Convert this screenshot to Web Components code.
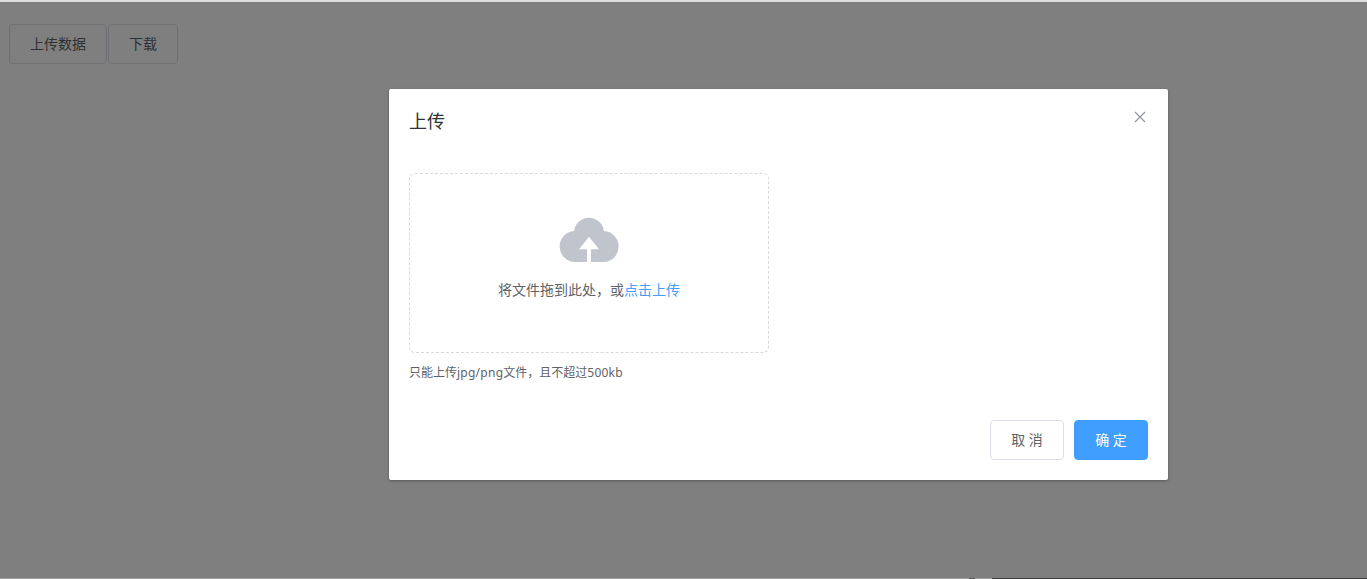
<!DOCTYPE html>
<html lang="zh-CN"><head><meta charset="utf-8"><title>上传</title>
<style>
html,body{margin:0;height:100%;overflow:hidden;background:#fff}
body{font-family:"Noto Sans","Noto Sans CJK SC","Liberation Sans",sans-serif;font-size:14px;color:#606266}
.latin{letter-spacing:.25px}
</style></head><body>
<app-page>
  <app-button slot="toolbar">上传数据</app-button>
  <app-button slot="toolbar">下载</app-button>
  <upload-dialog slot="overlay" heading="上传">
    <upload-dragger>
      <span>将文件拖到此处，或</span><em>点击上传</em>
    </upload-dragger>
    <span slot="tip">只能上传<span class="latin">jpg/png</span>文件，且不超过<span class="latin">500kb</span></span>
    <app-button slot="footer" spaced>取 消</app-button>
    <app-button slot="footer" primary spaced>确 定</app-button>
  </upload-dialog>
</app-page>
<script>
function def(name, html, init){
  customElements.define(name, class extends HTMLElement{
    constructor(){super();this.attachShadow({mode:'open'}).innerHTML=html;}
    connectedCallback(){if(init)init(this);}
  });
}
def('app-page',`<style>
:host{display:block;position:relative;width:100%;height:579px;overflow:hidden}
.bar{display:flex;gap:1px;padding:24px 9px 0}
.mask{position:absolute;inset:2px 0 1px 0;background:rgba(0,0,0,.5);display:flex;align-items:flex-start;justify-content:flex-start;padding:87px 0 0 389px}
.shade{position:absolute;left:0;right:0;top:0;height:2px;background:#dcdcdc}
.foot{position:absolute;left:0;right:0;bottom:0;height:1px;display:flex}
.foot i{display:block}
</style>
<div class="bar"><slot name="toolbar"></slot></div>
<div class="shade"></div>
<div class="mask"><slot name="overlay"></slot></div>
<div class="foot"><i style="width:969px;background:#a0a0a0"></i><i style="width:6px;background:#555"></i><i style="width:17px;background:#a0a0a0"></i><i style="flex:1;background:#3c3c3c"></i></div>`);
def('app-button',`<style>
:host{display:inline-block;box-sizing:border-box;height:40px;padding:0 20px;border:1px solid #dcdfe6;border-radius:4px;background:#fff;color:#606266;font-size:14px;line-height:38px;white-space:nowrap;text-align:center}
:host([primary]){background:#409eff;border-color:#409eff;color:#fff}
:host([spaced]){width:74px;padding:0}
</style><slot></slot>`);
def('upload-dialog',`<style>
:host{display:flex;flex-direction:column;box-sizing:border-box;width:779px;height:391px;background:#fff;border-radius:2px;box-shadow:0 1px 3px rgba(0,0,0,.3);position:relative}
header{padding:20px 20px 10px;font-size:18px;line-height:24px;color:#303133}
.close{position:absolute;top:20px;right:20px;width:16px;height:16px}
main{padding:30px 20px 0;font-size:14px;color:#606266}
.tip{margin-top:10px;font-size:12px;line-height:20px;color:#606266}
footer{margin-top:auto;display:flex;justify-content:flex-end;gap:10px;padding:10px 20px 20px}
</style>
<header></header>
<svg class="close" viewBox="0 0 16 16"><path d="M3 3L13 13M13 3L3 13" stroke="#909399" stroke-width="1.1" fill="none"/></svg>
<main><slot></slot><div class="tip"><slot name="tip"></slot></div></main>
<footer><slot name="footer"></slot></footer>`, el=>{el.shadowRoot.querySelector('header').textContent=el.getAttribute('heading');});
def('upload-dragger',`<style>
:host{display:flex;flex-direction:column;align-items:center;box-sizing:border-box;width:360px;height:180px;border:1px dashed #d9d9d9;border-radius:6px;background:#fff;text-align:center}
svg{display:block;margin-top:43px;width:60px;height:46px}
.t{margin-top:17px;font-size:14px;line-height:20px;color:#606266}
::slotted(em){font-style:normal;color:#409eff}
</style>
<svg viewBox="0 0 60 46"><path fill="#c0c4cc" d="M16.800 45A15.300 15.500 0 1 1 15.100 14A15 15 0 0 1 44.900 14A15.300 15.500 0 1 1 43.700 45H32V32.300H40L30 19.700L20 32.300H28V45Z"/></svg>
<div class="t"><slot></slot></div>`);
</script></body></html>
